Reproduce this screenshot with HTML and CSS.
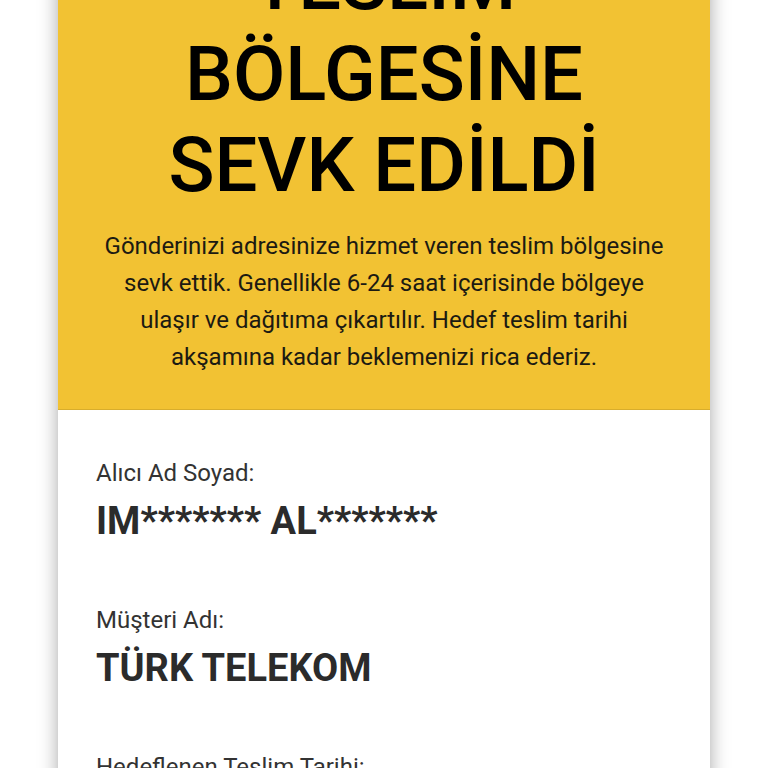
FILE: index.html
```html
<!DOCTYPE html>
<html lang="tr">
<head>
<meta charset="utf-8">
<title>Gönderi Takip</title>
<link rel="stylesheet" href="styles.css">
</head>
<body>
<div class="card">
  <header class="status">
    <h1 class="status-title">TESLİM BÖLGESİNE SEVK EDİLDİ</h1>
    <p class="status-text">Gönderinizi adresinize hizmet veren teslim bölgesine sevk ettik. Genellikle 6-24 saat içerisinde bölgeye ulaşır ve dağıtıma çıkartılır. Hedef teslim tarihi akşamına kadar beklemenizi rica ederiz.</p>
  </header>
  <section class="details">
    <div class="field">
      <div class="field-label">Alıcı Ad Soyad:</div>
      <div class="field-value">IM******* AL*******</div>
    </div>
    <div class="field">
      <div class="field-label">Müşteri Adı:</div>
      <div class="field-value">TÜRK TELEKOM</div>
    </div>
    <div class="field">
      <div class="field-label">Hedeflenen Teslim Tarihi:</div>
      <div class="field-value">&nbsp;</div>
    </div>
  </section>
</div>
</body>
</html>
```
FILE: styles.css
```css
html, body {
  margin: 0;
  padding: 0;
  background: #ffffff;
  font-family: Roboto, "Noto Sans", "Liberation Sans", sans-serif;
}
body {
  overflow: hidden;
}
.card {
  width: 652px;
  margin: -100px auto 0;
  background: #ffffff;
  box-shadow: 0 0 18px rgba(0, 0, 0, 0.35);
}
.status {
  background: #f2c233;
  border-bottom: 1px solid #d8ad2c;
  padding: 38px 40px 33px;
  text-align: center;
}
.status-title {
  margin: 0;
  font-size: 76px;
  line-height: 91px;
  font-weight: 500;
  color: #000;
  padding: 0 60px;
}
.status-text {
  margin: 17px 0 0;
  font-size: 24px;
  line-height: 37px;
  color: #1c1a12;
}
.details {
  padding: 48px 38px 0;
}
.field {
  margin-bottom: 62px;
}
.field-label {
  font-size: 24px;
  line-height: 30px;
  color: #333;
}
.field-value {
  margin-top: 11px;
  font-size: 38px;
  line-height: 44px;
  font-weight: 700;
  color: #2b2b2b;
}
```
